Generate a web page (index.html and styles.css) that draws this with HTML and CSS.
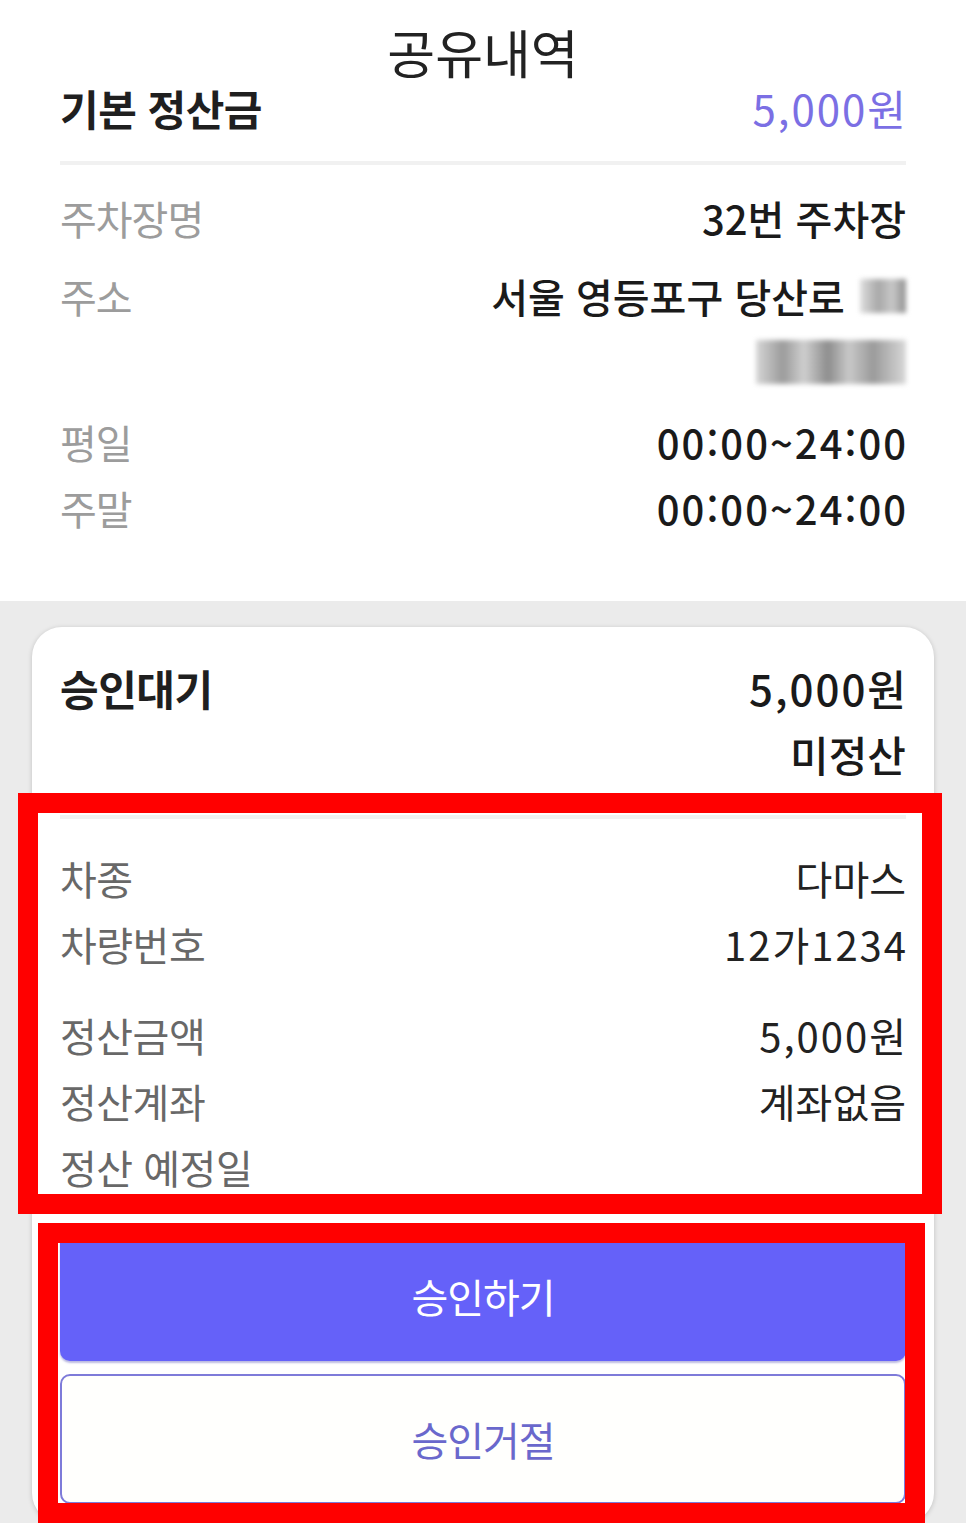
FILE: index.html
```html
<!DOCTYPE html>
<html lang="ko">
<head>
<meta charset="utf-8">
<title>공유내역</title>
<link rel="stylesheet" href="styles.css">
</head>
<body>
<div class="page">
  <section class="summary">
    <h1 class="title">공유내역</h1>
    <div class="base-row">
      <span class="base-label">기본 정산금</span>
      <span class="base-amount num">5,000원</span>
    </div>
    <hr class="divider">
    <dl class="info">
      <div class="info-row gap-a"><dt>주차장명</dt><dd class="strong">32번 주차장</dd></div>
      <div class="info-row gap-b"><dt>주소</dt><dd class="strong multi"><span class="line">서울 영등포구 당산로 <span class="blur blur-sm"></span></span><span class="line"><span class="blur blur-lg"></span></span></dd></div>
      <div class="info-row"><dt>평일</dt><dd class="strong num">00:00~24:00</dd></div>
      <div class="info-row"><dt>주말</dt><dd class="strong num">00:00~24:00</dd></div>
    </dl>
  </section>

  <section class="requests">
    <article class="card">
      <div class="card-head">
        <span class="status">승인대기</span>
        <div class="card-head-right">
          <span class="num">5,000원</span>
          <span>미정산</span>
        </div>
      </div>
      <hr class="divider card-divider">
      <dl class="detail">
        <div class="detail-row"><dt>차종</dt><dd>다마스</dd></div>
        <div class="detail-row gap-c"><dt>차량번호</dt><dd class="num">12가1234</dd></div>
        <div class="detail-row"><dt>정산금액</dt><dd class="num">5,000원</dd></div>
        <div class="detail-row"><dt>정산계좌</dt><dd>계좌없음</dd></div>
        <div class="detail-row"><dt>정산 예정일</dt><dd></dd></div>
      </dl>
      <div class="actions">
        <button class="btn btn-primary" type="button">승인하기</button>
        <button class="btn btn-outline" type="button">승인거절</button>
      </div>
    </article>
  </section>

  <div class="annot annot-1"></div>
  <div class="annot annot-2"></div>
</div>
</body>
</html>
```

FILE: styles.css
```css
* { box-sizing: border-box; }

html, body {
  margin: 0;
  padding: 0;
  background: #ffffff;
}

body {
  font-family: "Noto Sans CJK KR", "Noto Sans", sans-serif;
  color: #1c1c1c;
}

.page {
  position: relative;
  width: 966px;
}

/* ---------- summary ---------- */
.summary {
  padding: 22px 60px 60px;
  background: #ffffff;
}

.title {
  margin: 0;
  height: 60px;
  line-height: 60px;
  text-align: center;
  font-size: 52px;
  font-weight: 400;
  letter-spacing: 0;
  color: #222222;
}

.base-row {
  display: flex;
  justify-content: space-between;
  align-items: center;
  height: 52px;
  line-height: 52px;
}

.base-label {
  font-size: 42px;
  font-weight: 700;
  letter-spacing: -0.5px;
  color: #1f1f1f;
}

.base-amount {
  font-size: 42px;
  font-weight: 400;
  color: #7b6fe4;
}

.divider {
  margin: 27px 0 0;
  height: 4px;
  border: 0;
  background: #f1f1f1;
}

.info {
  margin: 20px 0 0;
  display: flex;
  flex-direction: column;
}

.info-row {
  display: flex;
  justify-content: space-between;
  align-items: flex-start;
  line-height: 66px;
  font-size: 40px;
}

.info-row.gap-a { margin-bottom: 12px; }
.info-row.gap-b { margin-bottom: 14px; }

.info-row dt {
  color: #9c9c9c;
  letter-spacing: -1px;
}

.info-row dd {
  margin: 0;
  text-align: right;
  letter-spacing: 0;
}

.strong {
  font-weight: 500;
  color: #1a1a1a;
}

.num {
  letter-spacing: 2px !important;
  margin-right: -2px !important;
}

.multi {
  display: flex;
  flex-direction: column;
  align-items: flex-end;
}

.line {
  display: flex;
  align-items: center;
  height: 66px;
  white-space: pre;
}

.blur {
  display: inline-block;
  filter: blur(2.5px);
  background: linear-gradient(90deg, #d6d6d6 0%, #9b9b9b 18%, #cfcfcf 32%, #8d8d8d 48%, #c9c9c9 62%, #9a9a9a 78%, #d8d8d8 100%);
}

.blur-sm {
  width: 46px;
  height: 34px;
  margin-left: 4px;
  background: linear-gradient(90deg, #dedede 0%, #a8a8a8 40%, #c8c8c8 70%, #8f8f8f 100%);
}

.blur-lg {
  width: 150px;
  height: 44px;
}

/* ---------- requests ---------- */
.requests {
  background: #ebebeb;
  padding: 26px 32px 0;
}

.card {
  background: #ffffff;
  border-radius: 30px;
  box-shadow: 0 1px 5px rgba(0, 0, 0, 0.18);
  padding: 28px 28px 19px;
}

.card-head {
  display: flex;
  justify-content: space-between;
  align-items: flex-start;
  font-size: 42px;
  line-height: 66px;
}

.status {
  font-weight: 700;
  letter-spacing: -0.5px;
  color: #1f1f1f;
}

.card-head-right {
  display: flex;
  flex-direction: column;
  align-items: flex-end;
  font-weight: 500;
  color: #1a1a1a;
}

.card-divider {
  margin-top: 28px;
}

.detail {
  margin: 26px 0 0;
  display: flex;
  flex-direction: column;
}

.detail-row {
  display: flex;
  justify-content: space-between;
  height: 66px;
  line-height: 66px;
  font-size: 40px;
}

.detail-row.gap-c { margin-bottom: 25px; }

.detail-row dt {
  color: #686868;
  font-weight: 400;
  letter-spacing: -0.5px;
}

.detail-row dd {
  margin: 0;
  color: #222222;
  letter-spacing: 0;
}

.actions {
  margin-top: 31px;
  display: flex;
  flex-direction: column;
  gap: 13px;
}

.btn {
  display: block;
  width: 100%;
  height: 130px;
  font-family: inherit;
  font-size: 40px;
  letter-spacing: -1px;
  cursor: pointer;
}

.btn-primary {
  border: 0;
  border-radius: 10px;
  background: #6561f9;
  color: #ffffff;
  box-shadow: 0 2px 2px rgba(60, 56, 170, 0.35);
}

.btn-outline {
  border: 2px solid #7e7bd9;
  border-radius: 10px;
  background: #fffffd;
  color: #6a68cc;
}

/* ---------- annotation overlays ---------- */
.annot {
  position: absolute;
  border: 20px solid #ff0000;
  pointer-events: none;
}

.annot-1 {
  left: 18px;
  top: 793px;
  width: 924px;
  height: 421px;
}

.annot-2 {
  left: 38px;
  top: 1223px;
  width: 887px;
  height: 300px;
}
```
